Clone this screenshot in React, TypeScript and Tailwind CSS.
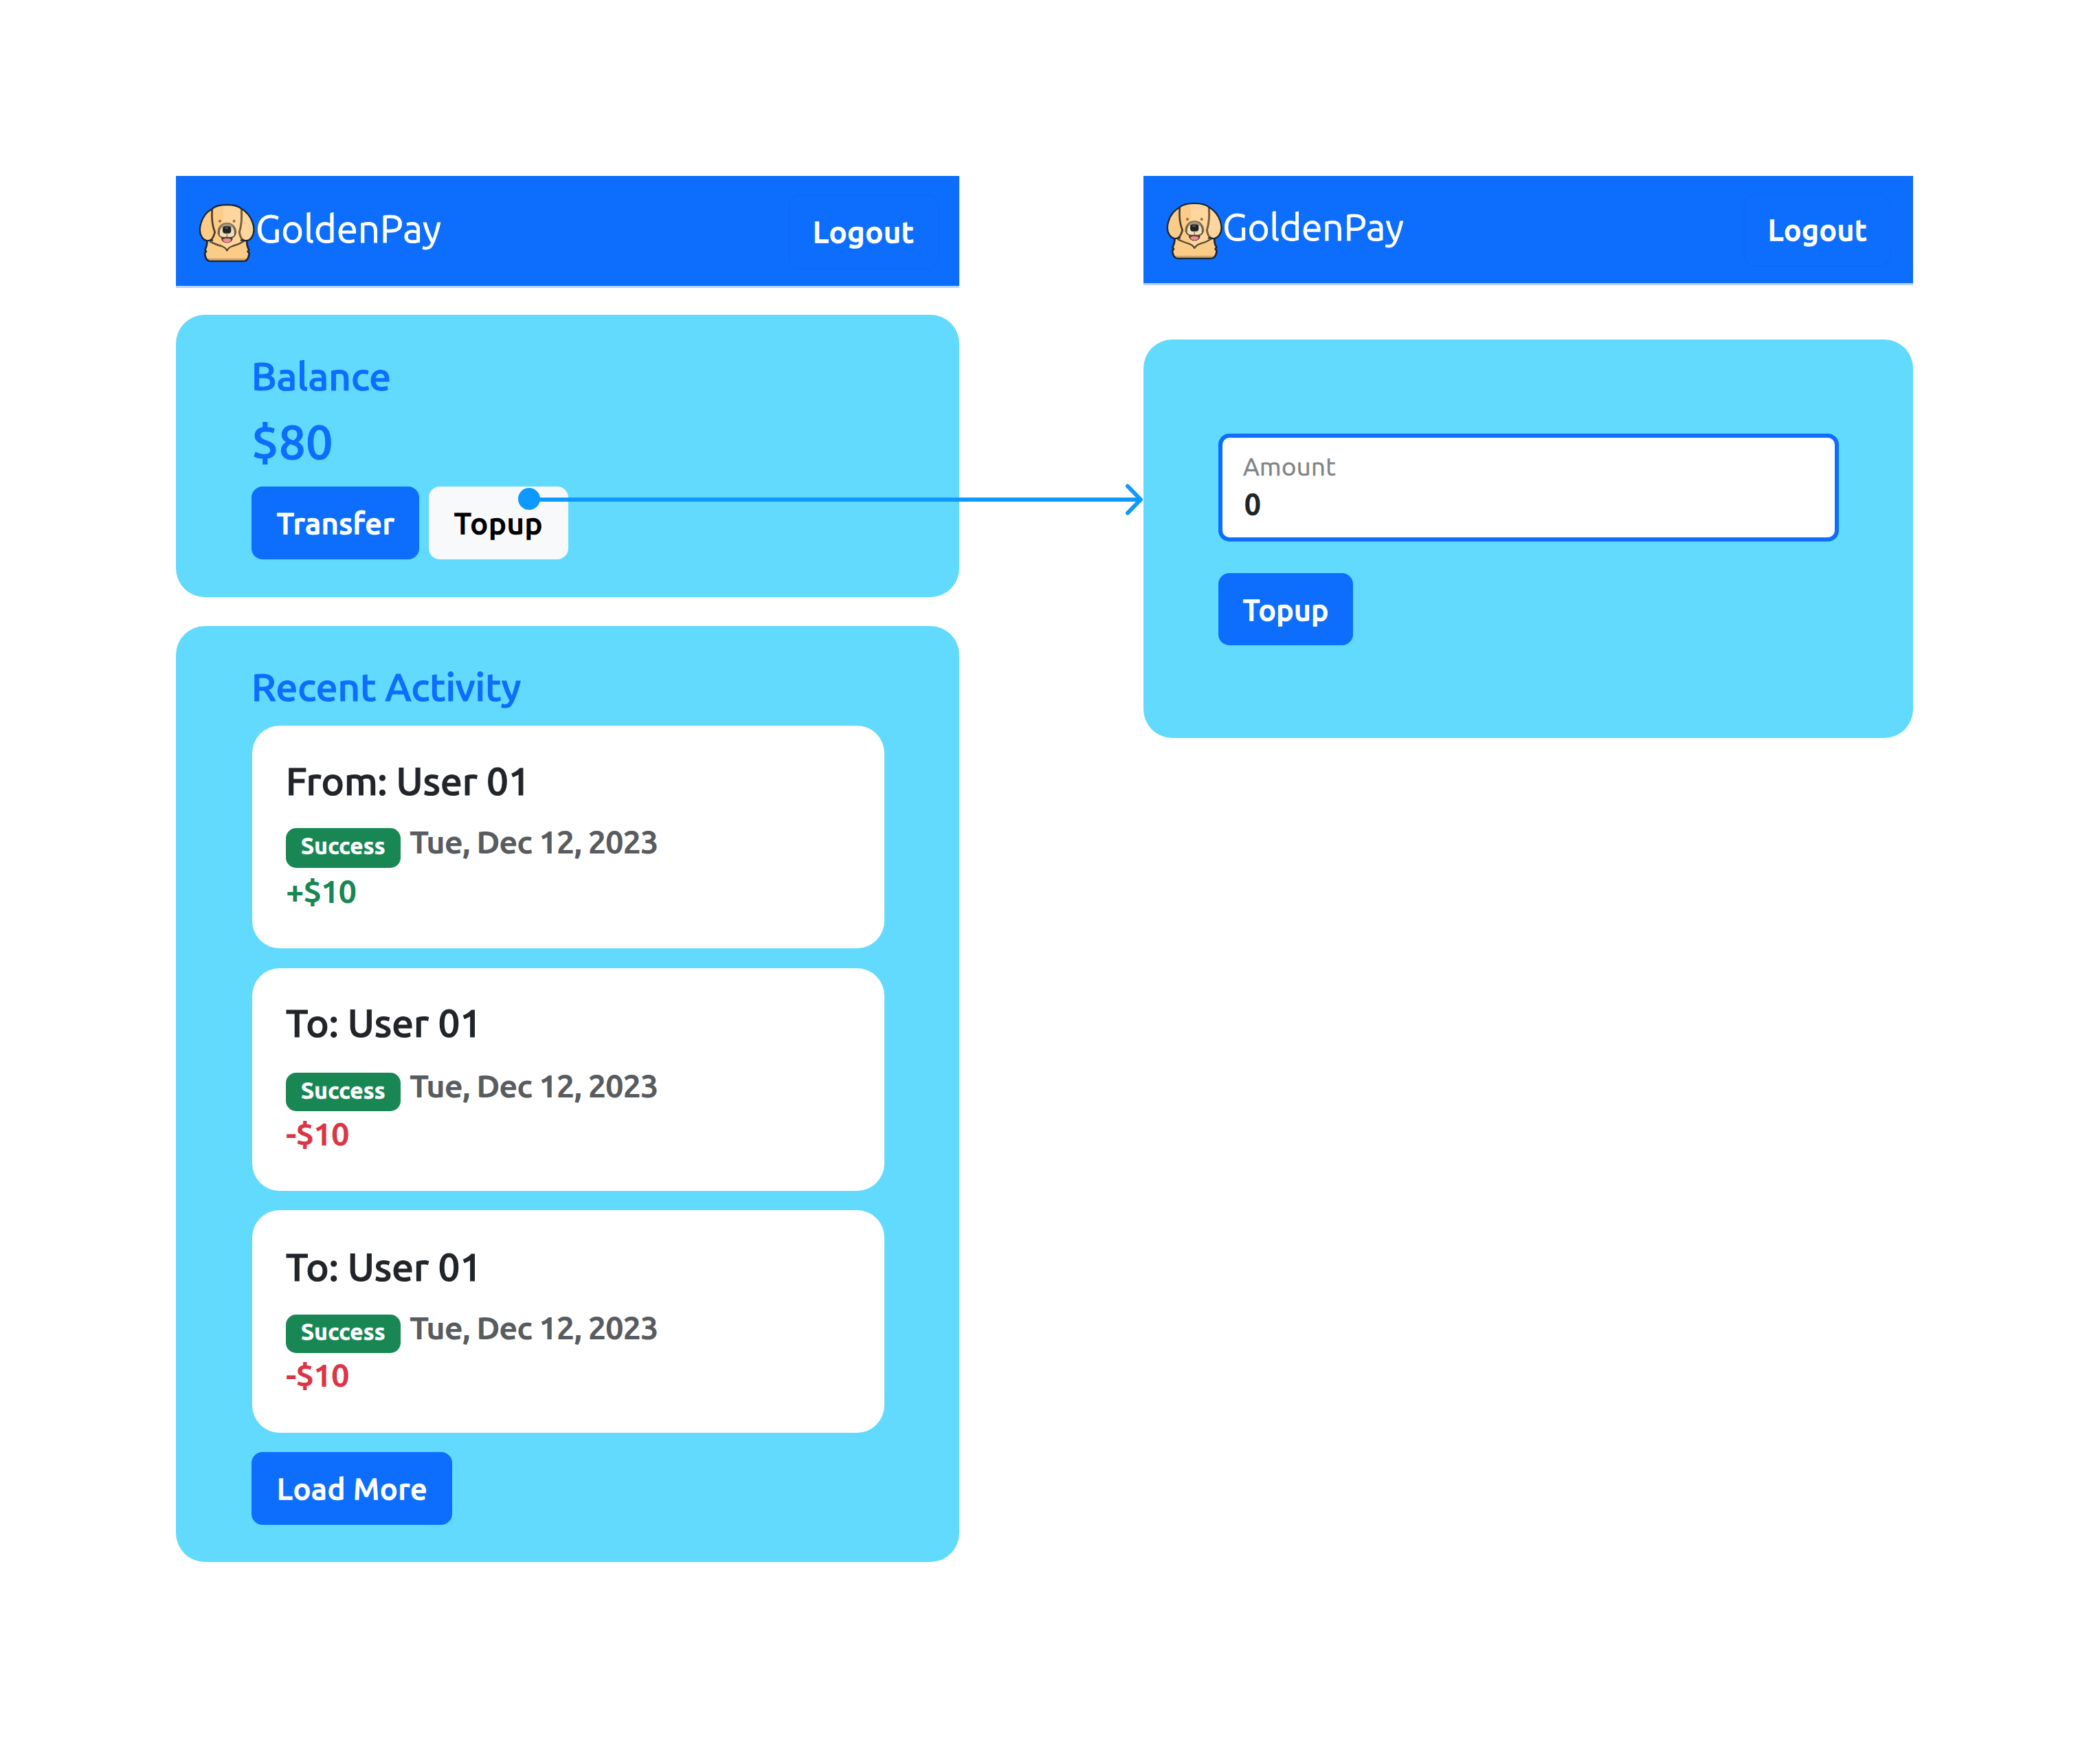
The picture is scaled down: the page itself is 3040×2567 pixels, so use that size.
import React from "react";

type Activity = {
  title: string;
  amount: string;
  amountClass: string;
  titleClass: string;
  rowClass: string;
  badgeClass: string;
};

const ACTIVITIES: Activity[] = [
  {
    title: "From: User 01",
    amount: "+$10",
    amountClass: "mt-[9px] text-[#198754] tracking-[-1px]",
    titleClass: "mt-[46px] tracking-[-0.05px]",
    rowClass: "mt-[29px]",
    badgeClass: "mt-[6px] h-[58px] leading-[52px]",
  },
  {
    title: "To: User 01",
    amount: "-$10",
    amountClass: "mt-[7px] text-[#dc3545] tracking-[-0.8px]",
    titleClass: "mt-[45px] tracking-[0px]",
    rowClass: "mt-[32px]",
    badgeClass: "mt-[7px] h-[56px] leading-[51px]",
  },
  {
    title: "To: User 01",
    amount: "-$10",
    amountClass: "mt-[6px] text-[#dc3545] tracking-[-0.8px]",
    titleClass: "mt-[48px] tracking-[0px]",
    rowClass: "mt-[29px]",
    badgeClass: "mt-[7px] h-[56px] leading-[50px]",
  },
];

function DogLogo({ className }: { className: string }) {
  return (
    <svg className={className} viewBox="27 30 246 258" preserveAspectRatio="none" fill="none" aria-hidden="true">
      <path
        d="M64 190 C66 212 60 222 55 232 L60 240 L54 248 C56 268 62 282 78 282 H224 C238 282 246 268 248 248 L242 240 L247 232 C240 220 236 210 238 190 Z"
        fill="#fbcb88"
        stroke="#1b2735"
        strokeWidth="8"
        strokeLinejoin="round"
      />
      <path d="M66 270 H236 L228 278 H74 Z" fill="#cda26a" />
      <path
        d="M84 58 C110 28 190 28 217 58 C226 110 222 160 208 198 C190 212 168 216 151 234 C134 216 112 212 92 198 C80 160 76 110 84 58 Z"
        fill="#fed59c"
      />
      <path d="M84 58 C98 44 116 39 134 38 V222 C120 212 104 208 92 198 C80 160 76 110 84 58 Z" fill="#fbcb88" />
      <path
        d="M76 196 C96 206 110 212 126 216 C136 219 146 226 151 236 C156 226 166 219 176 216 C192 212 208 206 226 194"
        stroke="#5b472d"
        strokeWidth="7"
        strokeLinejoin="round"
      />
      <path
        d="M86 56 C60 66 46 88 38 114 C30 138 30 160 42 178 C52 194 70 196 82 188 C92 180 94 168 98 156 C88 130 84 96 86 56 Z"
        fill="#fbcb88"
      />
      <path
        d="M215 56 C240 66 254 88 263 114 C271 138 271 160 259 178 C248 194 231 196 219 188 C209 180 207 168 205 156 C215 130 217 96 215 56 Z"
        fill="#fed59c"
      />
      <path d="M86 58 C83 98 88 130 98 156 C94 168 92 180 82 188" stroke="#4a3b28" strokeWidth="8" strokeLinecap="round" />
      <path d="M214 58 C217 98 213 130 205 156 C207 168 209 180 219 188" stroke="#77603f" strokeWidth="9" strokeLinecap="round" />
      <path
        d="M82 189 C70 196 52 194 42 178 C30 160 30 138 38 114 C46 88 60 68 86 54 C110 30 190 30 215 54 C240 68 254 88 263 114 C271 138 271 160 259 178 C248 194 231 196 219 189"
        stroke="#1b2735"
        strokeWidth="7"
        strokeLinecap="round"
      />
      <circle cx="120" cy="107" r="6" fill="#8b6f4a" />
      <circle cx="182" cy="107" r="6" fill="#8b6f4a" />
      <ellipse cx="151" cy="152" rx="38" ry="36" fill="#f3dfb4" />
      <path d="M115 164 C108 104 194 104 187 164" stroke="#75664c" strokeWidth="10" />
      <path d="M122 136 C132 112 170 112 180 136 Z" fill="#a3977a" />
      <path d="M115 162 C116 176 130 182 151 178 C172 182 186 176 187 162" stroke="#4f4534" strokeWidth="5" />
      <rect x="132" y="130" width="37" height="31" rx="12" fill="#1f2125" />
      <rect x="142" y="134" width="14" height="7" rx="3.5" fill="#5a5c60" />
      <path d="M151 160 V178" stroke="#8b8068" strokeWidth="4" />
      <path d="M126 181 H176 C174 210 128 210 126 181 Z" fill="#3a2426" />
      <path d="M132 187 C140 182 162 182 170 187 C168 206 134 206 132 187 Z" fill="#f28a98" />
    </svg>
  );
}

function DashboardScreen() {
  return (
    <section className="flex w-[1140px] flex-col">
      <header className="flex h-[163px] items-start border-b-[3px] border-[#b6d3ff] bg-[#0d6efd] text-white">
        <DogLogo className="mt-[40px] ml-[33px] h-[86px] w-[82px] shrink-0" />
        <span className="mt-[44px] ml-px text-[56px] leading-[66px] tracking-[0.15px] [-webkit-text-stroke:0.8px]">
          GoldenPay
        </span>
        <button className="mt-[27px] mr-[29px] ml-auto h-[109px] w-[220px] rounded-[18px] border-2 border-[#0c6bf8] pl-[34px] text-left text-[43px] font-medium tracking-[1.1px] [-webkit-text-stroke:1.6px]">
          Logout
        </button>
      </header>

      <div className="mt-[39px] flex h-[411px] flex-col rounded-[42px] bg-[#62dafd] pt-[55px] pl-[110px] text-[#0d6efd]">
        <h2 className="text-[56.5px] leading-[68px] font-medium tracking-[0px] [-webkit-text-stroke:1.2px]">Balance</h2>
        <p className="mt-[19px] text-[70px] leading-[84px] font-medium [-webkit-text-stroke:1.2px]">$80</p>
        <div className="mt-[24px] flex gap-[14px]">
          <button className="h-[106px] w-[244px] rounded-[16px] bg-[#0d6efd] pl-[37px] text-left text-[43px] font-medium tracking-[0.9px] text-white [-webkit-text-stroke:1.6px]">
            Transfer
          </button>
          <button className="h-[106px] w-[203px] rounded-[16px] bg-[#f8f9fa] pl-[37px] text-left text-[43px] font-medium tracking-[1.2px] text-black [-webkit-text-stroke:1.4px]">
            Topup
          </button>
        </div>
      </div>

      <div className="mt-[42px] flex h-[1362px] flex-col items-start rounded-[42px] bg-[#62dafd] pt-[54px] pl-[110px]">
        <h2 className="text-[56.5px] leading-[68px] font-medium tracking-[0.05px] text-[#0d6efd] [-webkit-text-stroke:1.2px]">
          Recent Activity
        </h2>
        <ul className="mt-[23px] ml-px flex flex-col gap-[28.5px]">
          {ACTIVITIES.map((a, i) => (
            <li key={i} className="flex h-[324px] w-[920px] flex-col rounded-[40px] bg-white pl-[49px]">
              <h3
                className={`text-[56.5px] leading-[68px] font-medium text-[#212529] [-webkit-text-stroke:1.2px] ${a.titleClass}`}
              >
                {a.title}
              </h3>
              <div className={`flex h-[63px] items-start gap-[13px] ${a.rowClass}`}>
                <span
                  className={`w-[167px] rounded-[15px] bg-[#198754] pl-[22px] text-[33.5px] font-bold tracking-[0.25px] text-white [-webkit-text-stroke:0.6px] ${a.badgeClass}`}
                >
                  Success
                </span>
                <span className="text-[47px] leading-[52px] font-bold tracking-[-1.1px] whitespace-nowrap text-[#595c5f]">
                  Tue, Dec 12, 2023
                </span>
              </div>
              <p className={`text-[47px] leading-[52px] font-bold ${a.amountClass}`}>{a.amount}</p>
            </li>
          ))}
        </ul>
        <button className="mt-[28px] h-[106px] w-[292px] rounded-[16px] bg-[#0d6efd] pl-[37px] text-left text-[43px] font-medium tracking-[1px] text-white [-webkit-text-stroke:1.4px]">
          Load More
        </button>
      </div>
    </section>
  );
}

function TopupScreen() {
  return (
    <section className="flex w-[1120px] flex-col">
      <header className="flex h-[159px] items-start border-b-[3px] border-[#b6d3ff] bg-[#0d6efd] text-white">
        <DogLogo className="mt-[38px] ml-[33px] h-[84px] w-[82px] shrink-0" />
        <span className="mt-[41px] text-[55px] leading-[66px] tracking-[-0.05px] [-webkit-text-stroke:0.8px]">GoldenPay</span>
        <button className="mt-[25px] mr-[32px] ml-auto h-[107px] w-[215px] rounded-[18px] border-2 border-[#0c6bf8] pl-[34px] text-left text-[42px] font-medium tracking-[1.1px] [-webkit-text-stroke:1.6px]">
          Logout
        </button>
      </header>

      <div className="mt-[79px] flex h-[580px] flex-col items-start rounded-[42px] bg-[#62dafd] pt-[137px] pl-[109px]">
        <div className="flex h-[157px] w-[903px] flex-col rounded-[16px] border-[6px] border-[#0d6efd] bg-white pt-[20px] pl-[30px]">
          <span className="text-[36.5px] leading-[44px] tracking-[0.4px] text-[#808386] [-webkit-text-stroke:0.6px]">
            Amount
          </span>
          <span className="mt-[8px] pl-[2px] text-[42px] leading-[50px] font-medium text-[#212529] [-webkit-text-stroke:1.6px]">
            0
          </span>
        </div>
        <button className="mt-[46px] h-[105px] w-[196px] rounded-[16px] bg-[#0d6efd] pt-px pl-[36px] text-left text-[42px] font-medium tracking-[0.9px] text-white [-webkit-text-stroke:1.6px]">
          Topup
        </button>
      </div>
    </section>
  );
}

function FlowArrow() {
  return (
    <svg
      className="absolute top-[700px] left-[750px]"
      width="920"
      height="54"
      viewBox="750 700 920 54"
      fill="none"
      stroke="#0d99ff"
      strokeWidth="6"
      strokeLinecap="round"
      strokeLinejoin="round"
      aria-hidden="true"
    >
      <circle cx="770" cy="726" r="16" fill="#0d99ff" stroke="none" />
      <path d="M770 727 H1659.5 M1641 707.5 L1660 727 L1641 746.5" />
    </svg>
  );
}

export default function App() {
  return (
    <main className="relative flex h-[2567px] w-[3040px] items-start gap-[268px] bg-white pt-[256px] pl-[256px] font-['Ubuntu','Noto_Sans',sans-serif]">
      <DashboardScreen />
      <TopupScreen />
      <FlowArrow />
    </main>
  );
}
